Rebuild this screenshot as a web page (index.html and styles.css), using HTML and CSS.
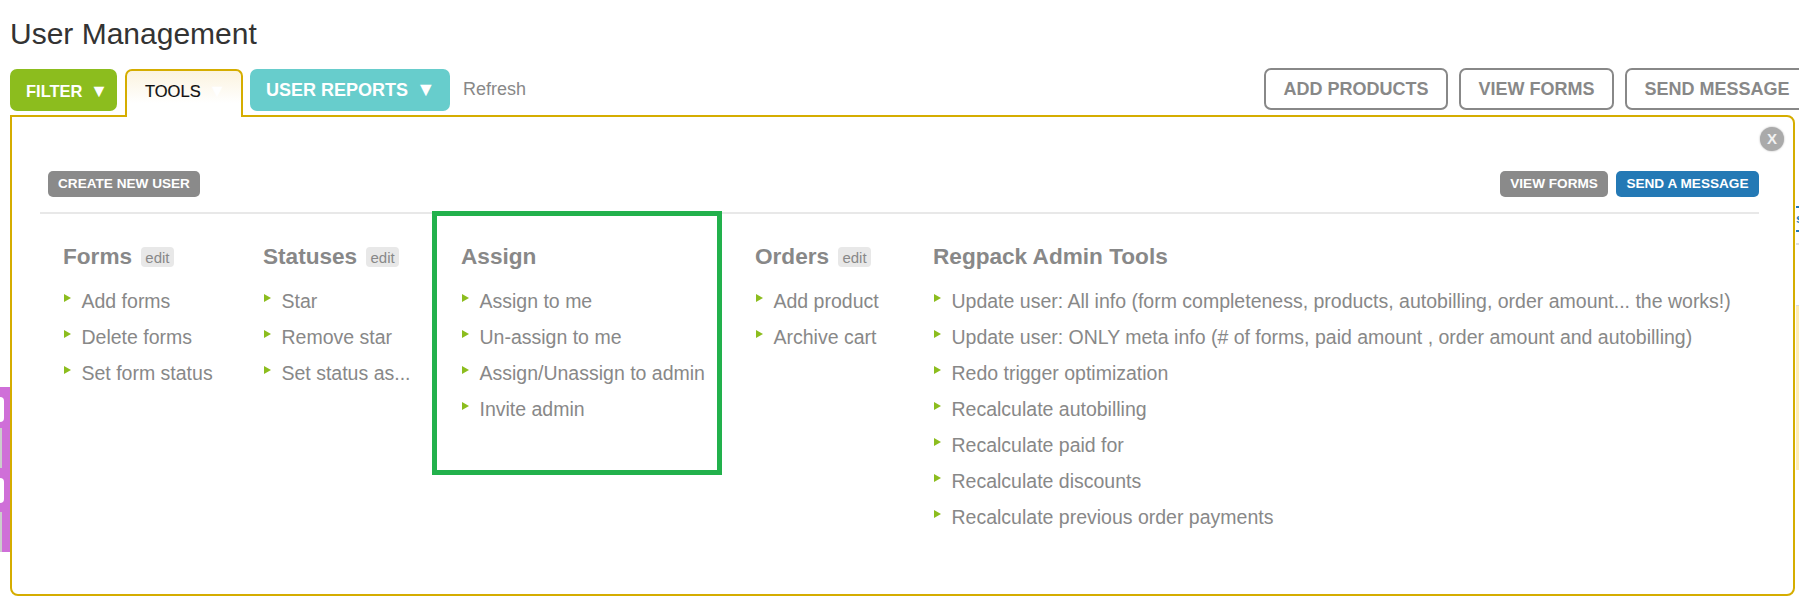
FILE: index.html
```html
<!DOCTYPE html>
<html lang="en">
<head>
    <meta charset="UTF-8">
    <meta name="viewport" content="width=device-width, initial-scale=1.0">
    <title>User Management</title>
    <link rel="stylesheet" href="styles.css">
</head>
<body>
    <!-- bits of the user table that stick out behind the panel -->
    <div class="behind-left">
        <span class="pill"></span>
        <span class="strip"></span>
        <span class="pill pill-low"></span>
        <span class="strip strip-low"></span>
    </div>
    <div class="behind-right">
        <span class="cell-link">s</span>
        <span class="row-line"></span>
        <span class="row-yellow"></span>
    </div>

    <h1 class="page-title">User Management</h1>

    <div class="toolbar">
        <a class="tab tab-filter" href="#">FILTER <span class="arrow">▼</span></a>
        <a class="tab tab-tools" href="#">TOOLS <span class="arrow">▼</span></a>
        <a class="tab tab-reports" href="#">USER REPORTS <span class="arrow">▼</span></a>
        <a class="refresh" href="#">Refresh</a>
        <div class="toolbar-right">
            <a class="outline-btn" href="#">ADD PRODUCTS</a>
            <a class="outline-btn" href="#">VIEW FORMS</a>
            <a class="outline-btn" href="#">SEND MESSAGE</a>
        </div>
    </div>

    <div class="panel">
        <a class="close-btn" href="#">X</a>
        <div class="panel-actions">
            <a class="small-btn" href="#">CREATE NEW USER</a>
            <div class="panel-actions-right">
                <a class="small-btn" href="#">VIEW FORMS</a>
                <a class="small-btn small-btn-blue" href="#">SEND A MESSAGE</a>
            </div>
        </div>

        <div class="columns">
            <div class="column col-forms">
                <h3>Forms <span class="edit">edit</span></h3>
                <ul>
                    <li>Add forms</li>
                    <li>Delete forms</li>
                    <li>Set form status</li>
                </ul>
            </div>
            <div class="column col-statuses">
                <h3>Statuses <span class="edit">edit</span></h3>
                <ul>
                    <li>Star</li>
                    <li>Remove star</li>
                    <li>Set status as...</li>
                </ul>
            </div>
            <div class="column col-assign">
                <h3>Assign</h3>
                <ul>
                    <li>Assign to me</li>
                    <li>Un-assign to me</li>
                    <li>Assign/Unassign to admin</li>
                    <li>Invite admin</li>
                </ul>
            </div>
            <div class="column col-orders">
                <h3>Orders <span class="edit">edit</span></h3>
                <ul>
                    <li>Add product</li>
                    <li>Archive cart</li>
                </ul>
            </div>
            <div class="column col-admin">
                <h3>Regpack Admin Tools</h3>
                <ul>
                    <li>Update user: All info (form completeness, products, autobilling, order amount... the works!)</li>
                    <li>Update user: ONLY meta info (# of forms, paid amount , order amount and autobilling)</li>
                    <li>Redo trigger optimization</li>
                    <li>Recalculate autobilling</li>
                    <li>Recalculate paid for</li>
                    <li>Recalculate discounts</li>
                    <li>Recalculate previous order payments</li>
                </ul>
            </div>
        </div>
    </div>
</body>
</html>
```

FILE: styles.css
```css
html, body {
    height: 100%;
}

body {
    margin: 0;
    padding: 0 0 0 10px;
    box-sizing: border-box;
    overflow: hidden;
    position: relative;
    font-family: "Liberation Sans", Arial, sans-serif;
    color: #888;
    background-color: #fff;
}

a {
    text-decoration: none;
    color: inherit;
}

.page-title {
    margin: 0;
    padding-top: 17px;
    height: 69px;
    box-sizing: border-box;
    font-size: 30px;
    line-height: 34px;
    font-weight: normal;
    color: #333;
}

/* Barra de tabs */
.toolbar {
    display: flex;
    align-items: flex-start;
    height: 46px;
    margin-right: -10px;
}

.tab {
    height: 42px;
    box-sizing: border-box;
    border-radius: 7px;
    font-weight: bold;
    color: #fff;
    line-height: 44px;
    white-space: nowrap;
}

.arrow {
    margin-left: 3px;
    color: #fff;
    font-size: 1.1em;
}

.tab-filter {
    width: 107px;
    padding-left: 16px;
    background-color: #8cbd1e;
    font-size: 16.5px;
}

.tab-tools {
    position: relative;
    z-index: 2;
    width: 118px;
    height: 48px;
    margin-left: 8px;
    padding-left: 18px;
    border: 2px solid #d5ad00;
    border-bottom: none;
    border-radius: 7px 7px 0 0;
    background: linear-gradient(to bottom, #fbf3df, #fff 70%);
    color: #111;
    font-size: 16.5px;
    font-weight: normal;
    line-height: 41px;
    -webkit-text-stroke: .2px #111;
}

.tab-tools .arrow {
    -webkit-text-stroke: 0;
}

.tab-reports {
    width: 200px;
    margin-left: 7px;
    padding-left: 16px;
    background-color: #67cdcc;
    font-size: 18px;
    line-height: 40px;
}

.refresh {
    margin-left: 13px;
    font-size: 18px;
    line-height: 40px;
}

.toolbar-right {
    display: flex;
    gap: 11px;
    margin-left: auto;
    margin-top: -1px;
}

.outline-btn {
    height: 42px;
    box-sizing: border-box;
    padding: 0 17.5px;
    border: 2px solid #888;
    border-radius: 7px;
    background-color: #fff;
    font-size: 18px;
    font-weight: bold;
    line-height: 38px;
    white-space: nowrap;
}

/* Panel */
.panel {
    position: relative;
    z-index: 1;
    width: 1785px;
    height: 481px;
    box-sizing: border-box;
    padding: 54px 34px 0 28px;
    border: 2px solid #d5ad00;
    border-radius: 0 8px 8px 8px;
    background-color: #fff;
}

.close-btn {
    position: absolute;
    top: 10px;
    right: 9px;
    width: 24px;
    height: 24px;
    border-radius: 50%;
    background-color: #aaa;
    box-shadow: 0 0 2px #aaa;
    color: #f2f2f2;
    font-size: 15px;
    font-weight: bold;
    line-height: 24px;
    text-align: center;
}

.panel-actions {
    display: flex;
    justify-content: space-between;
    height: 41px;
    padding: 0 0 0 8px;
    border-bottom: 2px solid #e8e8e8;
}

.panel-actions-right {
    display: flex;
    gap: 8px;
    align-items: flex-start;
}

.small-btn {
    height: 26px;
    padding: 0 10px;
    border-radius: 5px;
    background-color: #8a8a8a;
    color: #fff;
    font-size: 13.6px;
    font-weight: bold;
    line-height: 26px;
    white-space: nowrap;
}

.small-btn-blue {
    padding: 0 10.5px;
    background-color: #2479b5;
}

/* Columnas */
.columns {
    display: flex;
    align-items: flex-start;
    margin-top: -2px;
    padding-left: 23px;
}

.column {
    padding-top: 32px;
}

.column h3 {
    margin: 0 0 13px;
    font-size: 22.6px;
    line-height: 26px;
    font-weight: bold;
}

.edit {
    display: inline-block;
    height: 20px;
    margin-left: 3px;
    padding: 0 4px;
    border-radius: 4px;
    background-color: #e8e8e8;
    font-size: 15px;
    font-weight: normal;
    line-height: 22px;
    vertical-align: 1px;
}

.column ul {
    list-style: none;
    margin: 0;
    padding: 0;
}

.column li {
    position: relative;
    padding-left: 18.5px;
    font-size: 19.5px;
    line-height: 36px;
    white-space: nowrap;
}

.column li::before {
    content: "";
    position: absolute;
    left: 1px;
    top: 11px;
    border-left: 7px solid #8cbd1e;
    border-top: 4px solid transparent;
    border-bottom: 4px solid transparent;
}

.col-forms {
    width: 200px;
}

.col-statuses {
    width: 169px;
}

.col-assign {
    width: 290px;
    height: 264px;
    box-sizing: border-box;
    margin-top: -1px;
    padding: 28px 0 0 24px;
    border: 5px solid #22b14c;
}

.col-orders {
    width: 178px;
    margin-left: 33px;
}

/* Lo que asoma detrás del panel */
.behind-left {
    position: absolute;
    left: 0;
    top: 387px;
    width: 10px;
    height: 165px;
    background-color: #cf6fd8;
}

.pill {
    position: absolute;
    left: 0;
    top: 10px;
    width: 4px;
    height: 25px;
    border-radius: 0 8px 8px 0;
    background-color: #fff;
}

.pill-low {
    top: 91px;
}

.strip {
    position: absolute;
    left: 0;
    top: 41px;
    width: 2px;
    height: 40px;
    background-color: #ccc;
}

.strip-low {
    top: 125px;
}

.behind-right {
    position: absolute;
    left: 1796px;
    top: 206px;
    width: 3px;
    height: 394px;
}

.cell-link {
    display: block;
    height: 22px;
    border-top: 2px solid #2479b5;
    border-bottom: 2px solid #2479b5;
    overflow: hidden;
    color: #2479b5;
    font-size: 13px;
    font-weight: bold;
    line-height: 22px;
}

.row-line {
    position: absolute;
    left: 0;
    top: 37px;
    width: 3px;
    height: 2px;
    background-color: #e0e0e0;
}

.row-yellow {
    position: absolute;
    left: 0;
    top: 99px;
    width: 3px;
    height: 164px;
    border-top: 1px solid #ddd;
    background-color: #ffedb3;
}
```
